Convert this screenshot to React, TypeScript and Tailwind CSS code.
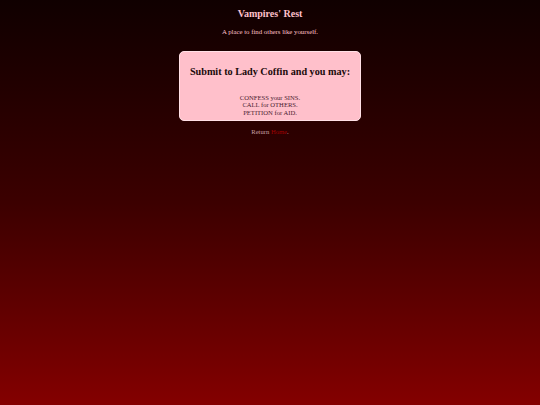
export default function App() {
  return (
    <div
      className="min-h-[405px] w-full bg-gradient-to-b from-[#100000] via-[#3c0000] via-50% to-[#840000] text-center antialiased"
      style={{ fontFamily: '"Liberation Serif", "Times New Roman", serif' }}
    >
      <div className="flex flex-col items-center pt-[8px]">
        <h1 className="text-[10px] font-bold leading-[12px] text-[#ffc0cb]">Vampires' Rest</h1>
        <p className="mt-[8px] text-[6.8px] leading-[8px] text-[#ffc0cb]">
          A place to find others like yourself.
        </p>

        <div className="mt-[15px] flex w-[182px] flex-col items-center rounded-[5px] border border-[#ffe0e6] bg-[#ffc0cb] pt-[14px] pb-[4px]">
          <h2 className="text-[10.2px] font-bold leading-[12px] text-[#1a0a0a]">
            Submit to Lady Coffin and you may:
          </h2>
          <div className="mt-[16px] text-[6.6px] leading-[7.4px] text-[#4a2030]">
            <p>CONFESS your SINS.</p>
            <p>CALL for OTHERS.</p>
            <p>PETITION for AID.</p>
          </div>
        </div>

        <p className="mt-[7px] text-[6.6px] leading-[8px] text-[#c8a0a8]">
          Return <a className="text-[#a00000]">Home</a>.
        </p>
      </div>
    </div>
  )
}
